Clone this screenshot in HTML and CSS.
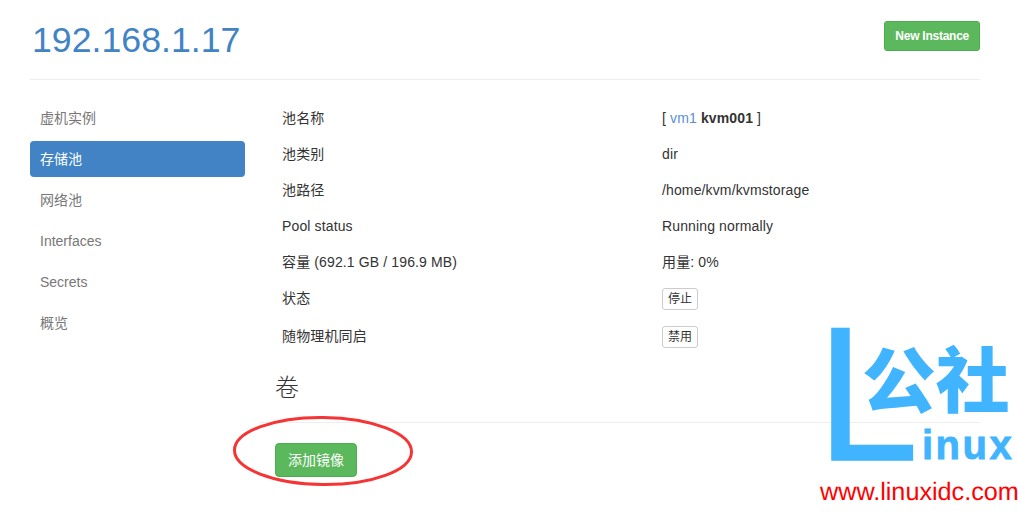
FILE: index.html
```html
<!DOCTYPE html>
<html lang="zh">
<head>
<meta charset="utf-8">
<title>192.168.1.17</title>
<link rel="stylesheet" href="styles.css">
</head>
<body>
<div class="page">
  <header class="page-head">
    <h1 class="host">192.168.1.17</h1>
    <a class="btn btn-new">New Instance</a>
  </header>
  <div class="layout">
    <nav class="nav">
      <a class="nav-item">虚机实例</a>
      <a class="nav-item active">存储池</a>
      <a class="nav-item">网络池</a>
      <a class="nav-item">Interfaces</a>
      <a class="nav-item">Secrets</a>
      <a class="nav-item">概览</a>
    </nav>
    <main class="main">
      <div class="rows">
        <div>池名称</div><div>[ <a class="link">vm1</a> <strong>kvm001</strong> ]</div>
        <div>池类别</div><div>dir</div>
        <div>池路径</div><div>/home/kvm/kvmstorage</div>
        <div>Pool status</div><div>Running normally</div>
        <div>容量 (692.1 GB / 196.9 MB)</div><div>用量: 0%</div>
        <div class="btn-label">状态</div><div class="btn-cell"><a class="btn-xs">停止</a></div>
        <div class="btn-label">随物理机同启</div><div class="btn-cell"><a class="btn-xs">禁用</a></div>
      </div>
      <h3 class="section">卷</h3>
      <a class="btn btn-add">添加镜像</a>
    </main>
  </div>
</div>
<svg class="circle" width="184" height="74" viewBox="0 0 184 74" aria-hidden="true">
  <ellipse cx="92" cy="37" rx="88.5" ry="33.5" fill="none" stroke="#f53535" stroke-width="3" transform="rotate(0.6 92 37)"/>
</svg>
<div class="mark" aria-hidden="true">
  <span class="mark-l">L</span>
  <span class="mark-cn">公社</span>
  <span class="mark-inux">inux</span>
  <span class="mark-url">www.linuxidc.com</span>
</div>
</body>
</html>
```
FILE: styles.css
```css
* { box-sizing: border-box; }
html, body { margin: 0; padding: 0; }
body {
  position: relative;
  width: 1018px;
  height: 517px;
  overflow: hidden;
  background: #fff;
  color: #333;
  font: 14px/20px "Liberation Sans", "Noto Sans CJK SC", sans-serif;
}
.page { width: 950px; margin-left: 30px; }
.page-head {
  height: 80px;
  padding-top: 20px;
  display: flex;
  justify-content: space-between;
  align-items: flex-start;
  border-bottom: 1px solid #eee;
}
.host { margin: 0 0 0 2px; font-size: 35.7px; line-height: 40px; font-weight: 400; color: #4183c4; }
.btn {
  display: inline-block;
  background: #5cb85c;
  border: 1px solid #4cae4c;
  border-radius: 3px;
  color: #fff;
  text-align: center;
}
.btn-new { margin-top: 1px; padding: 5px 10px; font-size: 12px; line-height: 18px; font-weight: 700; letter-spacing: -0.25px; }
.layout { display: flex; padding-top: 20px; }
.nav { width: 215px; flex: none; display: flex; flex-direction: column; gap: 5px; margin-right: 15px; }
.nav-item { height: 36px; padding: 8px 10px; color: #777; border-radius: 4px; }
.nav-item.active { background: #4183c4; color: #fff; }
.main { flex: 1; }
.rows {
  display: grid;
  grid-template-columns: 380px 1fr;
  row-gap: 16px;
  padding: 8px 0 0 22px;
  letter-spacing: 0.13px;
}
.link { color: #5a8fd0; }
.btn-label { line-height: 20px; }
.btn-cell { height: 22px; }
.btn-xs {
  display: inline-block;
  height: 22px;
  padding: 1px 5px;
  font-size: 12px;
  line-height: 18px;
  letter-spacing: 0;
  background: #fff;
  border: 1px solid #ccc;
  border-radius: 3px;
  color: #333;
}
.section {
  margin: 27px 0 20px;
  padding: 0 0 21px 15px;
  border-bottom: 1px solid #eee;
  font-size: 24px;
  line-height: 26px;
  font-weight: 300;
}
.btn-add {
  margin-left: 15px;
  padding: 6px 12px;
  font-size: 14px;
  line-height: 20px;
  border-radius: 4px;
}
.circle { position: absolute; left: 231px; top: 414px; }
.mark { position: absolute; left: 815px; top: 320px; width: 203px; height: 197px; }
.mark span { position: absolute; white-space: nowrap; }
.mark-l {
  left: 2px;
  top: -1px;
  font-size: 192px;
  line-height: 150px;
  color: #40b4ff;
  -webkit-text-stroke: 1.5px #40b4ff;
  transform: scaleX(0.95);
  transform-origin: left top;
}
.mark-cn {
  left: 47px;
  top: 15px;
  font: 900 71px/80px "Noto Sans CJK SC", sans-serif;
  color: #40b4ff;
  transform: scaleX(1.04);
  transform-origin: left top;
}
.mark-inux {
  left: 107px;
  top: 102px;
  font: 700 40px/46px "Liberation Sans", sans-serif;
  letter-spacing: 2.5px;
  color: #40b4ff;
  -webkit-text-stroke: 0.8px #40b4ff;
}
.mark-url {
  left: 5px;
  top: 156px;
  font-size: 25.2px;
  line-height: 32px;
  color: #f00;
  text-rendering: geometricPrecision;
}
```
